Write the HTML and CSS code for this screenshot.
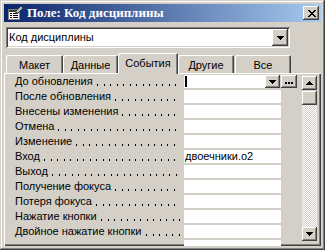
FILE: index.html
```html
<!DOCTYPE html>
<html lang="ru">
<head>
<meta charset="utf-8">
<title>Поле: Код дисциплины</title>
<link rel="stylesheet" href="styles.css">
</head>
<body>
<div class="window">
  <div class="titlebar">
    <svg class="ticon" width="15" height="14" viewBox="0 0 15 14" shape-rendering="crispEdges">
      <rect x="0" y="3" width="12" height="11" fill="#808080"/>
      <rect x="1" y="4" width="10" height="9" fill="#ffffff"/>
      <rect x="1" y="4" width="10" height="2" fill="#404040"/>
      <rect x="2" y="7" width="2" height="1" fill="#000"/>
      <rect x="5" y="7" width="5" height="1" fill="#000"/>
      <rect x="2" y="9" width="2" height="1" fill="#000"/>
      <rect x="5" y="9" width="5" height="1" fill="#000"/>
      <rect x="2" y="11" width="2" height="1" fill="#000"/>
      <rect x="5" y="11" width="5" height="1" fill="#000"/>
      <path d="M8 5 L13 0 L15 2 L10 7 L8 7 Z" fill="#c0c0c0" stroke="#404040" stroke-width="1" shape-rendering="auto"/>
    </svg>
    <span class="title">Поле: Код дисциплины</span>
    <div class="close">
      <svg width="8" height="7" viewBox="0 0 8 7" shape-rendering="crispEdges">
        <path d="M0 0H2V1H3V2H5V1H6V0H8V1H7V2H6V3H5V4H6V5H7V6H8V7H6V6H5V5H3V6H2V7H0V6H1V5H2V4H3V3H2V2H1V1H0Z" fill="#000"/>
      </svg>
    </div>
  </div>

  <div class="combo">
    <span class="combo-text">Код дисциплины</span>
    <div class="btn dropbtn">
      <svg width="7" height="4" viewBox="0 0 7 4" shape-rendering="crispEdges"><path d="M0 0H7V1H6V2H5V3H4V4H3V3H2V2H1V1H0Z" fill="#000"/></svg>
    </div>
  </div>

  <div class="tabs">
    <div class="tab t1">Макет</div>
    <div class="tab t2">Данные</div>
    <div class="tab t3 active">События</div>
    <div class="tab t4">Другие</div>
    <div class="tab t5">Все</div>
  </div>

  <div class="panel">
    <div class="rows">
      <div class="row">
        <div class="label"><span class="ltext">До обновления</span><span class="leader"></span></div>
        <div class="value first">
          <div class="editbox"><span class="caret"></span></div>
          <div class="btn smallbtn">
            <svg width="7" height="4" viewBox="0 0 7 4" shape-rendering="crispEdges"><path d="M0 0H7V1H6V2H5V3H4V4H3V3H2V2H1V1H0Z" fill="#000"/></svg>
          </div>
          <div class="btn smallbtn ellipsis">
            <svg width="8" height="2" viewBox="0 0 8 2" shape-rendering="crispEdges"><rect x="0" y="0" width="2" height="2" fill="#000"/><rect x="3" y="0" width="2" height="2" fill="#000"/><rect x="6" y="0" width="2" height="2" fill="#000"/></svg>
          </div>
        </div>
      </div>
      <div class="row"><div class="label"><span class="ltext">После обновления</span><span class="leader"></span></div><div class="value"></div></div>
      <div class="row"><div class="label"><span class="ltext">Внесены изменения</span><span class="leader"></span></div><div class="value"></div></div>
      <div class="row"><div class="label"><span class="ltext">Отмена</span><span class="leader"></span></div><div class="value"></div></div>
      <div class="row"><div class="label"><span class="ltext">Изменение</span><span class="leader"></span></div><div class="value"></div></div>
      <div class="row"><div class="label"><span class="ltext">Вход</span><span class="leader"></span></div><div class="value">двоечники.o2</div></div>
      <div class="row"><div class="label"><span class="ltext">Выход</span><span class="leader"></span></div><div class="value"></div></div>
      <div class="row"><div class="label"><span class="ltext">Получение фокуса</span><span class="leader"></span></div><div class="value"></div></div>
      <div class="row"><div class="label"><span class="ltext">Потеря фокуса</span><span class="leader"></span></div><div class="value"></div></div>
      <div class="row"><div class="label"><span class="ltext">Нажатие кнопки</span><span class="leader"></span></div><div class="value"></div></div>
      <div class="row"><div class="label"><span class="ltext">Двойное нажатие кнопки</span><span class="leader"></span></div><div class="value"></div></div>
      <div class="row"><div class="label"></div><div class="value"></div></div>
    </div>
    <div class="scrollbar">
      <div class="btn sbtn">
        <svg width="7" height="4" viewBox="0 0 7 4" shape-rendering="crispEdges"><path d="M3 0H4V1H5V2H6V3H7V4H0V3H1V2H2V1H3Z" fill="#000"/></svg>
      </div>
      <div class="btn thumb"></div>
      <div class="track"></div>
      <div class="btn sbtn">
        <svg width="7" height="4" viewBox="0 0 7 4" shape-rendering="crispEdges"><path d="M0 0H7V1H6V2H5V3H4V4H3V3H2V2H1V1H0Z" fill="#000"/></svg>
      </div>
    </div>
  </div>
</div>
</body>
</html>
```

FILE: styles.css
```css
html, body {
  margin: 0;
  padding: 0;
  background: #d4d0c8;
}

body {
  font-family: "Liberation Sans", Arial, sans-serif;
  font-size: 11px;
  color: #000;
}

.window {
  width: 325px;
  height: 250px;
  box-sizing: border-box;
  padding: 4px;
  background: #d4d0c8;
  box-shadow: inset -1px -1px #404040, inset 1px 1px #d4d0c8, inset -2px -2px #808080, inset 2px 2px #ffffff;
  display: flex;
  flex-direction: column;
  overflow: hidden;
}

.titlebar {
  height: 18px;
  flex: none;
  display: flex;
  align-items: center;
  padding-left: 4px;
  background: linear-gradient(90deg, #0a246a, #a6caf0);
}

.ticon {
  flex: none;
  margin-top: -1px;
}

.title {
  margin-left: 4px;
  font-family: "Liberation Serif", "Times New Roman", serif;
  font-weight: bold;
  font-size: 13px;
  color: #fff;
  white-space: nowrap;
  flex: 1;
}

.btn {
  background: #d4d0c8;
  box-shadow: inset -1px -1px #404040, inset 1px 1px #ffffff, inset -2px -2px #808080;
  display: flex;
  align-items: center;
  justify-content: center;
  box-sizing: border-box;
}

.close {
  width: 16px;
  height: 14px;
  margin-right: 2px;
  background: #d4d0c8;
  box-shadow: inset -1px -1px #404040, inset 1px 1px #ffffff, inset -2px -2px #808080;
  display: flex;
  align-items: center;
  justify-content: center;
  padding-left: 1px;
  box-sizing: border-box;
}

.combo {
  margin: 5px 0 0 2px;
  width: 284px;
  height: 21px;
  box-sizing: border-box;
  padding: 2px;
  background: #fff;
  box-shadow: inset 1px 1px #808080, inset -1px -1px #ffffff, inset 2px 2px #404040, inset -2px -2px #d4d0c8;
  display: flex;
  align-items: center;
  flex: none;
}

.combo-text {
  flex: 1;
  padding-left: 1px;
  line-height: 17px;
}

.dropbtn {
  width: 16px;
  height: 17px;
  padding-top: 1px;
}

.tabs {
  margin-top: 5px;
  height: 20px;
  padding-left: 2px;
  display: flex;
  align-items: flex-end;
  flex: none;
  position: relative;
  z-index: 1;
}

.tab {
  height: 18px;
  box-sizing: border-box;
  border-radius: 2px 2px 0 0;
  box-shadow: inset 1px 1px #ffffff, inset -1px 0 #404040, inset -2px 0 #808080;
  display: flex;
  align-items: center;
  justify-content: center;
  padding-top: 2px;
}

.t1 { width: 57px; }
.t2 { width: 55px; }
.t3 { width: 60px; }
.t4 { width: 56px; }
.t5 { width: 56px; margin-left: 1px; }

.tab.active {
  height: 21px;
  margin-bottom: -1px;
  background: #d4d0c8;
  padding-top: 0;
  padding-bottom: 1px;
}

.panel {
  flex: 1;
  min-height: 0;
  box-sizing: border-box;
  padding: 2px;
  box-shadow: inset 1px 1px #ffffff, inset -1px -1px #404040, inset -2px -2px #808080;
  display: flex;
  align-items: flex-start;
  overflow: hidden;
}

.rows {
  width: 291px;
  flex: none;
  display: flex;
  flex-direction: column;
  gap: 2px;
}

.row {
  height: 13px;
  display: flex;
  flex: none;
}

.label {
  width: 178px;
  box-sizing: border-box;
  padding: 0 4px 0 9px;
  display: flex;
  white-space: nowrap;
  line-height: 13px;
}

.ltext {
  flex: none;
}

.leader {
  flex: 1;
  min-width: 0;
  margin-left: 4px;
  background-image: linear-gradient(90deg, #000 0 1px, transparent 1px 7px, #000 7px 8px, transparent 8px);
  background-size: 13px 2px;
  background-repeat: repeat-x;
  background-position: 0 9px;
}

.value {
  width: 97px;
  background: #fff;
  line-height: 13px;
  padding-left: 1px;
  box-sizing: border-box;
  white-space: nowrap;
}

.value.first {
  width: 113px;
  background: transparent;
  padding-left: 0;
  display: flex;
}

.editbox {
  width: 81px;
  background: #fff;
  position: relative;
}

.caret {
  position: absolute;
  left: 1px;
  top: 1px;
  width: 2px;
  height: 11px;
  background: #000;
}

.smallbtn {
  width: 15px;
  height: 13px;
}

.ellipsis {
  width: 16px;
  margin-left: 1px;
  align-items: flex-end;
  padding-bottom: 4px;
}

.scrollbar {
  margin: 1px 0 0 5px;
  width: 15px;
  height: 165px;
  flex: none;
  display: flex;
  flex-direction: column;
}

.sbtn {
  height: 14px;
  flex: none;
}

.thumb {
  height: 14px;
  margin-top: 1px;
  flex: none;
}

.track {
  flex: 1;
  background: repeating-conic-gradient(#ffffff 0 25%, #d4d0c8 0 50%) 0 0 / 2px 2px;
}
```
